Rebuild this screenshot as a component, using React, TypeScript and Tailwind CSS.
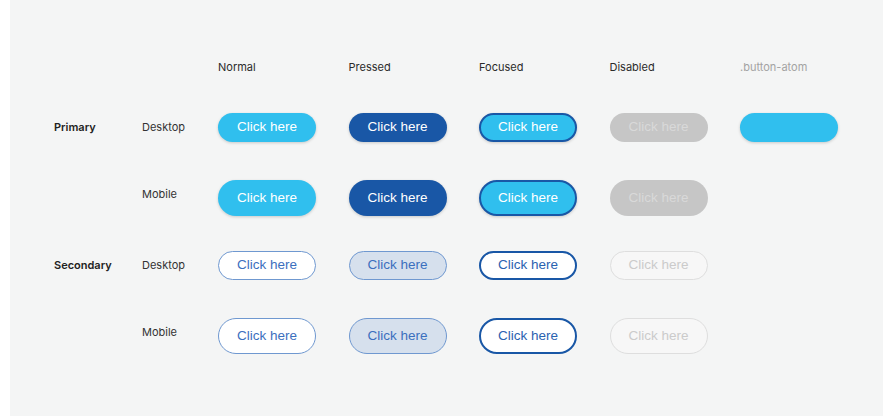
import React from "react";

type Variant =
  | "pNormal"
  | "pPressed"
  | "pFocused"
  | "pDisabled"
  | "sNormal"
  | "sPressed"
  | "sFocused"
  | "sDisabled";

const styles: Record<Variant, string> = {
  pNormal: "bg-[#30bfee] text-white shadow-[0_1px_3px_rgba(0,0,0,0.18)]",
  pPressed: "bg-[#1957a6] text-white shadow-[0_1px_3px_rgba(0,0,0,0.18)]",
  pFocused:
    "bg-[#30bfee] text-white border-2 border-[#1957a6] shadow-[0_1px_3px_rgba(0,0,0,0.18)]",
  pDisabled: "bg-[#c6c6c6] text-[#d9d9d9]",
  sNormal: "bg-white text-[#3b6fbe] border border-[#6f98d0]",
  sPressed: "bg-[#d6e0ed] text-[#3b6fbe] border border-[#6f98d0]",
  sFocused: "bg-white text-[#2a62b0] border-2 border-[#1957a6]",
  sDisabled: "bg-[#f7f7f7] text-[#cbcbcb] border border-[#dedede]",
};

function Btn({ v, mobile }: { v: Variant; mobile?: boolean }) {
  return (
    <div
      className={`${styles[v]} ${
        mobile ? "h-[36px]" : "h-[29px]"
      } w-[98px] rounded-full flex items-center justify-center text-[13.5px] font-['Liberation_Sans',Arial,sans-serif]`}
    >
      Click here
    </div>
  );
}

function Row({
  label,
  device,
  mobile,
  variants,
  atom,
  className,
}: {
  label?: string;
  device: string;
  mobile?: boolean;
  variants: Variant[];
  atom?: boolean;
  className?: string;
}) {
  return (
    <div
      className={`grid grid-cols-[88px_76px_130.5px_130.5px_130.5px_130.5px_130.5px] items-center ${
        mobile ? "h-[36px]" : "h-[29px]"
      } ${className ?? ""}`}
    >
      <div className="text-[11px] font-semibold text-[#222]">{label ?? ""}</div>
      <div
        className={`text-[11px] text-[#333] ${mobile ? "self-start pt-[6px]" : ""}`}
      >
        {device}
      </div>
      {variants.map((v, i) => (
        <div key={i}>
          <Btn v={v} mobile={mobile} />
        </div>
      ))}
      {atom && (
        <div>
          <div className="h-[29px] w-[98px] rounded-full bg-[#30bfee] shadow-[0_1px_3px_rgba(0,0,0,0.18)]" />
        </div>
      )}
    </div>
  );
}

export default function App() {
  return (
    <div className="w-[893px] h-[416px] bg-white pl-[10px] pr-[10px] font-['Inter','Open_Sans',sans-serif]">
      <div className="h-full bg-[#f4f5f5] pl-[44px] pt-[59px]">
        <div className="grid grid-cols-[88px_76px_130.5px_130.5px_130.5px_130.5px_130.5px] h-[14px] items-center text-[11px] text-[#2b2b2b]">
          <div />
          <div />
          <div>Normal</div>
          <div>Pressed</div>
          <div>Focused</div>
          <div>Disabled</div>
          <div className="text-[#a3a3a3]">.button-atom</div>
        </div>
        <Row
          className="mt-[40px]"
          label="Primary"
          device="Desktop"
          variants={["pNormal", "pPressed", "pFocused", "pDisabled"]}
          atom
        />
        <Row
          className="mt-[38px]"
          device="Mobile"
          mobile
          variants={["pNormal", "pPressed", "pFocused", "pDisabled"]}
        />
        <Row
          className="mt-[35px]"
          label="Secondary"
          device="Desktop"
          variants={["sNormal", "sPressed", "sFocused", "sDisabled"]}
        />
        <Row
          className="mt-[38px]"
          device="Mobile"
          mobile
          variants={["sNormal", "sPressed", "sFocused", "sDisabled"]}
        />
      </div>
    </div>
  );
}
